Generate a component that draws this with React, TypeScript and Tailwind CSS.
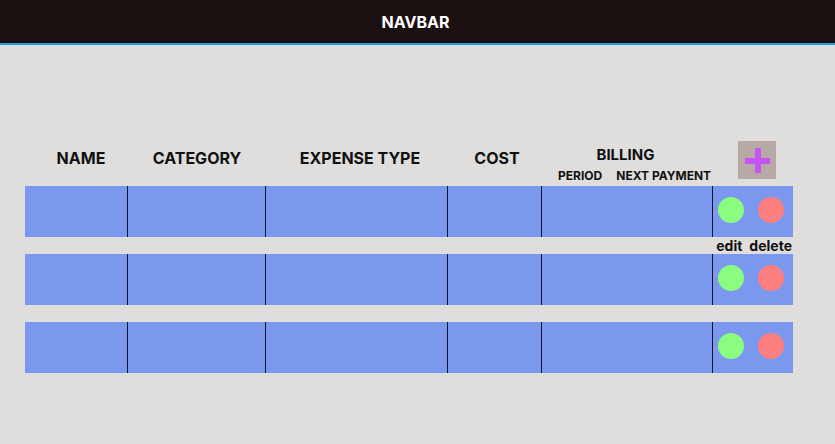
const COLS = "grid grid-cols-[102px_138px_182px_94px_171px_81px]";

function Row() {
  return (
    <div className={`${COLS} h-[51px] bg-[#7a98ee]`}>
      <div />
      <div className="border-l border-[#10142a]" />
      <div className="border-l border-[#10142a]" />
      <div className="border-l border-[#10142a]" />
      <div className="border-l border-[#10142a]" />
      <div className="flex items-start gap-[14px] border-l border-[#10142a] pl-[5px] pt-[11px]">
        <button className="h-[26px] w-[26px] rounded-full bg-[#8afc7f]" aria-label="edit" />
        <button className="h-[26px] w-[26px] rounded-full bg-[#fd7f7f]" aria-label="delete" />
      </div>
    </div>
  );
}

export default function App() {
  return (
    <div className="min-h-screen bg-[#dfdedd] font-['Inter',sans-serif] text-[#111]">
      {/* ── top bar ── */}
      <nav className="flex h-[45px] items-center justify-center border-b-2 border-[#1e9be9] bg-[#1b1010]">
        <span className="pr-[4px] text-[16px] font-bold leading-none text-white">NAVBAR</span>
      </nav>

      <div className="ml-[25px] mt-[96px] w-[768px]">
        {/* column headings */}
        <div className={`${COLS} h-[45px] font-bold`}>
          <div className="pl-[10px] pt-[9px] text-center text-[16px] leading-none">NAME</div>
          <div className="pl-[2px] pt-[9px] text-center text-[16px] leading-none">CATEGORY</div>
          <div className="pl-[8px] pt-[9px] text-center text-[16px] leading-none">EXPENSE TYPE</div>
          <div className="pl-[6px] pt-[9px] text-center text-[16px] leading-none">COST</div>
          <div className="flex flex-col">
            <div className="pr-[2px] pt-[6px] text-center text-[15px] leading-none">BILLING</div>
            <div className="mt-[8px] flex gap-[14px] pl-[17px] text-[12px] leading-none">
              <span>PERIOD</span>
              <span>NEXT PAYMENT</span>
            </div>
          </div>
          <div className="pl-[26px]">
            <button className="flex h-[38px] w-[38px] items-center justify-center bg-[#b8a9a7]" aria-label="add">
              <svg width="25" height="25" viewBox="0 0 25 25">
                <rect x="10" y="0" width="6" height="25" fill="#c455f0" />
                <rect x="0" y="10" width="25" height="6" fill="#c455f0" />
              </svg>
            </button>
          </div>
        </div>

        {/* expense rows */}
        <Row />
        <div className="flex h-[17px] items-start justify-end gap-[7px] pr-[1px] pt-[2px] text-[14px] font-bold leading-none">
          <span>edit</span>
          <span>delete</span>
        </div>
        <Row />
        <div className="h-[17px]" />
        <Row />
      </div>
    </div>
  );
}
